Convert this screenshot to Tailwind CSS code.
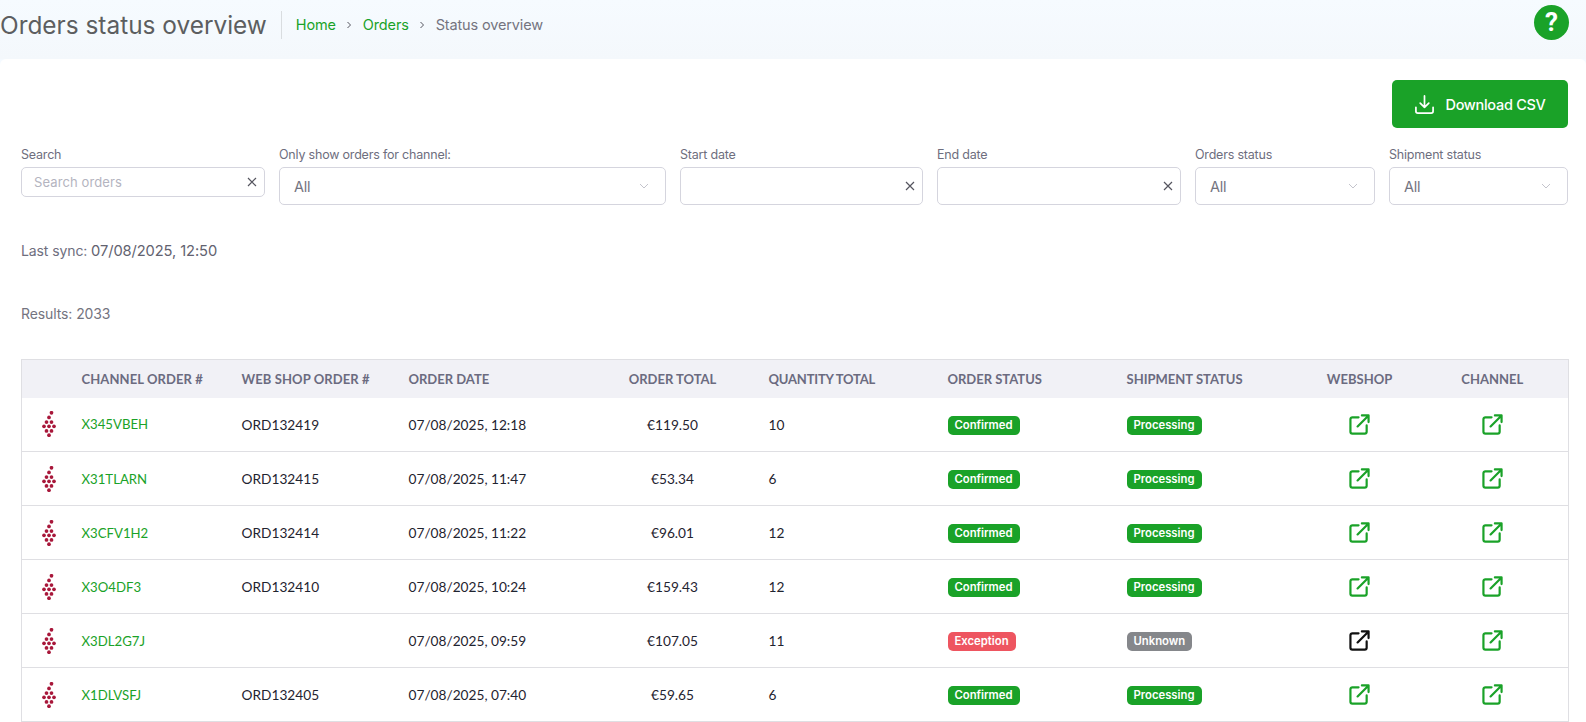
<!DOCTYPE html>
<html lang="en">
<head>
  <meta charset="UTF-8">
  <title>Orders status overview</title>
  <script src="https://cdn.jsdelivr.net/npm/@tailwindcss/browser@4"></script>
</head>
<body class="h-[722px] overflow-hidden bg-[#f5faff] font-['Inter',sans-serif] text-[#1f2430]">
  <header class="flex h-[59px] items-center bg-gradient-to-b from-[#f6fbff] to-[#f4f8fc]">
    <h1 class="-mt-[9px] pr-[14px] text-[24.4px] leading-none font-normal text-[#5c5e60]">Orders status overview</h1>
    <nav class="-mt-[9px] flex h-[28px] items-center gap-[9.5px] border-l border-[#d9dde0] pl-[14px] text-[14.5px] tracking-[-0.15px]">
      <span class="text-[#1aa228]">Home</span>
      <svg class="h-[8px] w-[8px] text-[#55555f]" viewBox="0 0 8 8" fill="none" stroke="currentColor"><path d="M2.5 1l3 3-3 3"/></svg>
      <span class="text-[#1aa228]">Orders</span>
      <svg class="h-[8px] w-[8px] text-[#55555f]" viewBox="0 0 8 8" fill="none" stroke="currentColor"><path d="M2.5 1l3 3-3 3"/></svg>
      <span class="text-[#74747f]">Status overview</span>
    </nav>
    <div class="mr-[17px] -mt-[14px] ml-auto flex h-[35px] w-[35px] items-center justify-center rounded-full bg-[#1aa228] font-['Roboto',sans-serif] text-[26px] font-bold text-white">?</div>
  </header>

  <main class="h-[663px] rounded-t-[6px] bg-white pt-[21px] pr-[18px] pl-[21px]">
    <div class="flex justify-end">
      <button class="flex h-[48px] w-[176px] items-center justify-center gap-[10px] rounded-[5px] bg-[#1aa228] text-[14.5px] font-medium tracking-[-0.3px] text-white">
        <svg class="h-[21px] w-[21px]" viewBox="0 0 22 22" fill="none" stroke="currentColor" stroke-width="1.8" stroke-linecap="round" stroke-linejoin="round"><path d="M11 2v12M6.5 9.5L11 14l4.5-4.5M2 14v4a2 2 0 0 0 2 2h14a2 2 0 0 0 2-2v-4"/></svg>
        <span class="mt-px">Download CSV</span>
      </button>
    </div>

    <div class="mt-[19px] flex items-start gap-[14px] text-[12.5px] tracking-[-0.2px] text-[#6e6e7e]">
      <div class="w-[244px]">
        <label class="block h-[20px] leading-[16.5px]">Search</label>
        <div class="flex h-[30px] items-center justify-between rounded-[5px] border border-[#d5d5de] pr-[7px] pl-[12px] text-[13px] tracking-[0.1px] text-[#b4b4c0]">
          <span class="mt-[2px]">Search orders</span>
          <svg class="h-[10px] w-[10px] text-[#55555f]" viewBox="0 0 10 10" fill="none" stroke="currentColor" stroke-width="1.2"><path d="M1 1l8 8M9 1l-8 8"/></svg>
        </div>
      </div>
      <div class="w-[387px]">
        <label class="block h-[20px] leading-[16.5px]">Only show orders for channel:</label>
        <div class="flex h-[38px] items-center justify-between rounded-[5px] border border-[#d5d5de] pr-[16px] pl-[14px] text-[14.5px] text-[#74747f]">
          <span class="mt-px">All</span>
          <svg class="h-[8px] w-[10px] text-[#c4c4cc]" viewBox="0 0 10 8" fill="none" stroke="currentColor"><path d="M1 2l4 4 4-4"/></svg>
        </div>
      </div>
      <div class="w-[243px]">
        <label class="block h-[20px] leading-[16.5px]">Start date</label>
        <div class="flex h-[38px] items-center justify-end rounded-[5px] border border-[#d5d5de] pr-[7px]">
          <svg class="h-[10px] w-[10px] text-[#55555f]" viewBox="0 0 10 10" fill="none" stroke="currentColor" stroke-width="1.2"><path d="M1 1l8 8M9 1l-8 8"/></svg>
        </div>
      </div>
      <div class="w-[244px]">
        <label class="block h-[20px] leading-[16.5px]">End date</label>
        <div class="flex h-[38px] items-center justify-end rounded-[5px] border border-[#d5d5de] pr-[7px]">
          <svg class="h-[10px] w-[10px] text-[#55555f]" viewBox="0 0 10 10" fill="none" stroke="currentColor" stroke-width="1.2"><path d="M1 1l8 8M9 1l-8 8"/></svg>
        </div>
      </div>
      <div class="w-[180px]">
        <label class="block h-[20px] leading-[16.5px]">Orders status</label>
        <div class="flex h-[38px] items-center justify-between rounded-[5px] border border-[#d5d5de] pr-[16px] pl-[14px] text-[14.5px] text-[#74747f]">
          <span class="mt-px">All</span>
          <svg class="h-[8px] w-[10px] text-[#c4c4cc]" viewBox="0 0 10 8" fill="none" stroke="currentColor"><path d="M1 2l4 4 4-4"/></svg>
        </div>
      </div>
      <div class="w-[179px]">
        <label class="block h-[20px] leading-[16.5px]">Shipment status</label>
        <div class="flex h-[38px] items-center justify-between rounded-[5px] border border-[#d5d5de] pr-[16px] pl-[14px] text-[14.5px] text-[#74747f]">
          <span class="mt-px">All</span>
          <svg class="h-[8px] w-[10px] text-[#c4c4cc]" viewBox="0 0 10 8" fill="none" stroke="currentColor"><path d="M1 2l4 4 4-4"/></svg>
        </div>
      </div>
    </div>

    <p class="mt-[36px] h-[20px] text-[14px] leading-[20px] tracking-[-0.1px] text-[#6e6e7e]">Last sync: <span class="text-[14.7px] text-[#62626f]">07/08/2025, 12:50</span></p>
    <p class="mt-[43px] h-[20px] text-[14px] leading-[20px] tracking-[-0.1px] text-[#74747f]">Results: 2033</p>

    <table class="mt-[35px] w-[1547px] table-fixed border-collapse border border-[#dfdfe3] font-['Lato',sans-serif] text-[13.7px]">
      <colgroup>
        <col class="w-[50px]"><col class="w-[160px]"><col class="w-[167px]"><col class="w-[188px]"><col class="w-[172px]"><col class="w-[179px]"><col class="w-[179px]"><col class="w-[178px]"><col class="w-[130px]"><col class="w-[144px]">
      </colgroup>
      <thead class="bg-[#f1f1f6] text-[13px] text-[#6b6b80]">
        <tr class="h-[38px]">
          <th></th>
          <th class="px-[10px] pt-px text-left font-bold tracking-[0.1px]">CHANNEL ORDER #</th>
          <th class="px-[10px] pt-px text-left font-bold tracking-[0.1px]">WEB SHOP ORDER #</th>
          <th class="px-[10px] pt-px text-left font-bold">ORDER DATE</th>
          <th class="px-[10px] pt-px text-center font-bold">ORDER TOTAL</th>
          <th class="px-[10px] pt-px text-left font-bold tracking-[-0.2px]">QUANTITY TOTAL</th>
          <th class="px-[10px] pt-px text-left font-bold">ORDER STATUS</th>
          <th class="px-[10px] pt-px text-left font-bold">SHIPMENT STATUS</th>
          <th class="px-[10px] pt-px text-center font-bold">WEBSHOP</th>
          <th class="pt-px pr-[18px] pl-[10px] text-center font-bold">CHANNEL</th>
        </tr>
      </thead>
      <tbody id="rows"></tbody>
    </table>
  </main>

  <script>
    const greenBadge = "bg-[#1aa228]";
    const rows = [
      ["X345VBEH", "ORD132419", "07/08/2025, 12:18", "€119.50", "10", "Confirmed", "Processing"],
      ["X31TLARN", "ORD132415", "07/08/2025, 11:47", "€53.34", "6", "Confirmed", "Processing"],
      ["X3CFV1H2", "ORD132414", "07/08/2025, 11:22", "€96.01", "12", "Confirmed", "Processing"],
      ["X3O4DF3", "ORD132410", "07/08/2025, 10:24", "€159.43", "12", "Confirmed", "Processing"],
      ["X3DL2G7J", "", "07/08/2025, 09:59", "€107.05", "11", "Exception", "Unknown"],
      ["X1DLVSFJ", "ORD132405", "07/08/2025, 07:40", "€59.65", "6", "Confirmed", "Processing"],
    ];
    const badgeColors = { Confirmed: greenBadge, Processing: greenBadge, Exception: "bg-[#ee5560]", Unknown: "bg-[#85878b]" };

    const grape = `<svg class="ml-[19px] h-[26px] w-[16px] text-[#a8173a]" viewBox="64 37 38 73" fill="currentColor">
      <circle cx="90" cy="42" r="5.2"/><circle cx="83" cy="55" r="5.2"/><circle cx="76" cy="68" r="5.2"/><circle cx="90" cy="68" r="5.2"/>
      <circle cx="69" cy="80" r="5.2"/><circle cx="83" cy="80" r="5.2"/><circle cx="97" cy="80" r="5.2"/><circle cx="76" cy="93" r="5.2"/>
      <circle cx="90" cy="93" r="5.2"/><circle cx="83" cy="105" r="5.2"/></svg>`;

    function linkIcon(color) {
      return `<svg class="mx-auto h-[21px] w-[21px] ${color}" viewBox="0 0 22 22" fill="none" stroke="currentColor" stroke-width="2.3" stroke-linecap="round" stroke-linejoin="round">
        <path d="M10 3.5H3.5a2 2 0 0 0-2 2v13a2 2 0 0 0 2 2h13a2 2 0 0 0 2-2V12"/><path d="M9 13L20.5 1.5M13.5 1.5h7v7"/></svg>`;
    }

    function badge(text) {
      return `<span class="inline-block h-[19px] rounded-[5px] px-[7px] font-['Inter',sans-serif] text-[11.3px] leading-[19px] font-semibold text-white ${badgeColors[text]}">${text}</span>`;
    }

    document.getElementById("rows").innerHTML = rows.map(r => `
      <tr class="h-[54px] border-b border-[#dfdfe3]">
        <td>${grape}</td>
        <td class="px-[10px] pt-[2px] text-[13.2px] text-[#1aa228]">${r[0]}</td>
        <td class="px-[10px] pt-[2px]">${r[1]}</td>
        <td class="px-[10px] pt-[2px]">${r[2]}</td>
        <td class="px-[10px] pt-[2px] text-center">${r[3]}</td>
        <td class="px-[10px] pt-[2px]">${r[4]}</td>
        <td class="px-[10px]">${badge(r[5])}</td>
        <td class="px-[10px]">${badge(r[6])}</td>
        <td class="px-[10px]">${linkIcon(r[1] ? "text-[#1aa228]" : "text-[#111111]")}</td>
        <td class="pr-[18px] pl-[10px]">${linkIcon("text-[#1aa228]")}</td>
      </tr>`).join("");
  </script>
</body>
</html>
